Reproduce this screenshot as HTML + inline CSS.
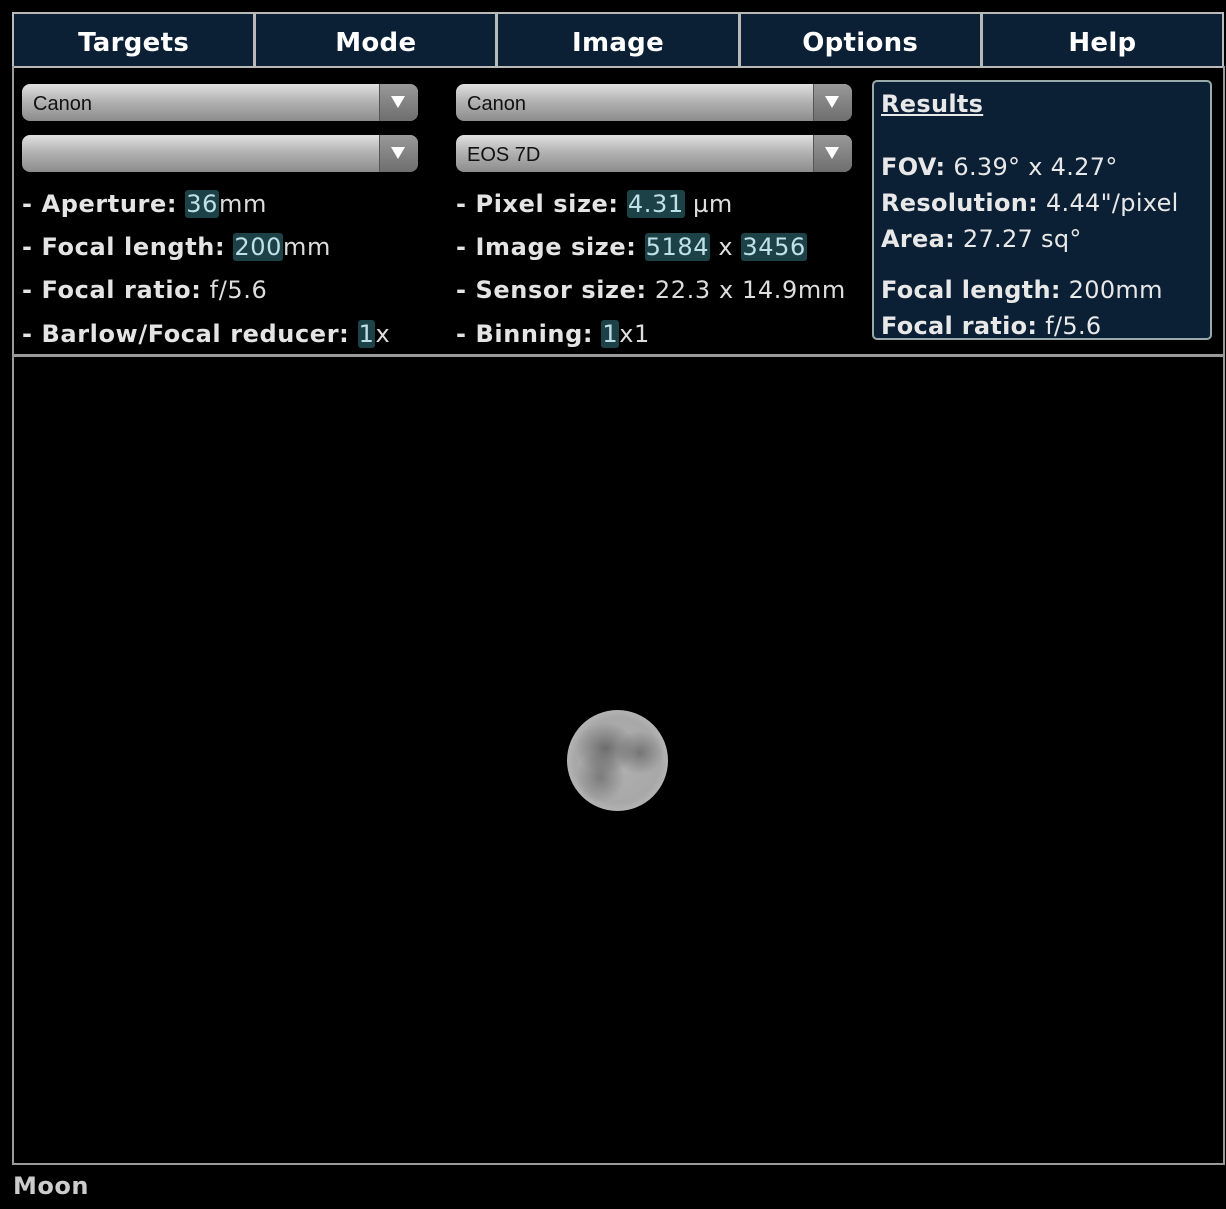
<!DOCTYPE html>
<html><head><meta charset="utf-8"><style>
*{margin:0;padding:0;box-sizing:border-box}
body{width:1226px;height:1209px;background:#000;position:relative;overflow:hidden;font-family:"DejaVu Sans","Liberation Sans",sans-serif;color:#ddd}
.nav{position:absolute;left:12px;top:12px;width:1212px;height:56px;border:2px solid #b9b9b9;background:#0c2035;display:flex}
.nav div{flex:1;border-right:3px solid #b9b9b9;color:#fff;font-weight:bold;font-size:26px;text-align:center;line-height:58px;letter-spacing:0.3px}
.nav div:last-child{border-right:none}
.frame{position:absolute;left:12px;top:66px;width:1213px;height:1099px;border:2px solid #9a9a9a;border-top:none}
.sep{position:absolute;left:12px;top:354px;width:1213px;height:3px;background:#9a9a9a}
.sel{position:absolute;width:396px;height:37px;border-radius:8px;background:linear-gradient(#e0e0e0,#b4b4b4 45%,#8c8c8c);font-family:"Liberation Sans",sans-serif;font-size:20px;color:#111;line-height:40px;padding-left:11px;overflow:hidden}
.sel:after{content:"";position:absolute;right:0;top:0;width:38px;height:37px;background:linear-gradient(#999,#6e6e6e);border-left:1px solid #555}
.sel i{position:absolute;right:13px;top:12px;width:0;height:0;border-left:7px solid transparent;border-right:7px solid transparent;border-top:12px solid #fff;z-index:2}
.row{position:absolute;font-size:24px;color:#ddd;white-space:nowrap;line-height:36px;letter-spacing:0.6px}
.row b{color:#e4e4e4}
.h{background:#1c4248;color:#bfe0e6;border-radius:3px;padding:0 1px}
.res{position:absolute;left:872px;top:80px;width:340px;height:260px;background:#0c2035;border:2px solid #9aa;border-radius:5px;overflow:hidden}
.res div{position:absolute;left:7px;font-size:24px;white-space:nowrap;color:#e8e8e8;letter-spacing:0.3px}
.moon{position:absolute;left:567px;top:710px;width:101px;height:101px;border-radius:50%;background:
radial-gradient(ellipse 30px 26px at 38% 38%,rgba(80,80,80,.7),transparent),
radial-gradient(ellipse 24px 22px at 72% 42%,rgba(80,80,80,.6),transparent),
radial-gradient(ellipse 24px 26px at 33% 66%,rgba(90,90,90,.6),transparent),
radial-gradient(circle at 50% 50%,#b0b0b0 0,#a8a8a8 60%,#c8c8c8 90%,#777 100%)}
</style></head><body>
<div class="nav"><div>Targets</div><div>Mode</div><div>Image</div><div>Options</div><div>Help</div></div>
<div class="frame"></div>
<div class="sep"></div>
<div class="sel" style="left:22px;top:84px">Canon<i></i></div>
<div class="sel" style="left:22px;top:135px"><i></i></div>
<div class="sel" style="left:456px;top:84px">Canon<i></i></div>
<div class="sel" style="left:456px;top:135px">EOS 7D<i></i></div>
<div class="row" style="left:22px;top:186px"><b>- Aperture:</b> <span class="h">36</span>mm</div>
<div class="row" style="left:22px;top:229px"><b>- Focal length:</b> <span class="h">200</span>mm</div>
<div class="row" style="left:22px;top:272px"><b>- Focal ratio:</b> f/5.6</div>
<div class="row" style="left:22px;top:316px"><b>- Barlow/Focal reducer:</b> <span class="h">1</span>x</div>
<div class="row" style="left:456px;top:186px"><b>- Pixel size:</b> <span class="h">4.31</span> µm</div>
<div class="row" style="left:456px;top:229px"><b>- Image size:</b> <span class="h">5184</span> x <span class="h">3456</span></div>
<div class="row" style="left:456px;top:272px"><b>- Sensor size:</b> 22.3 x 14.9mm</div>
<div class="row" style="left:456px;top:316px"><b>- Binning:</b> <span class="h">1</span>x1</div>
<div class="res">
<div style="top:8px"><b style="text-decoration:underline">Results</b></div>
<div style="top:71px"><b>FOV:</b> 6.39° x 4.27°</div>
<div style="top:107px"><b>Resolution:</b> 4.44"/pixel</div>
<div style="top:143px"><b>Area:</b> 27.27 sq°</div>
<div style="top:194px"><b>Focal length:</b> 200mm</div>
<div style="top:230px"><b>Focal ratio:</b> f/5.6</div>
</div>
<div class="moon"></div>
<div style="position:absolute;left:13px;top:1172px;font-size:24px;font-weight:bold;color:#ccc;letter-spacing:0.5px">Moon</div>
</body></html>
